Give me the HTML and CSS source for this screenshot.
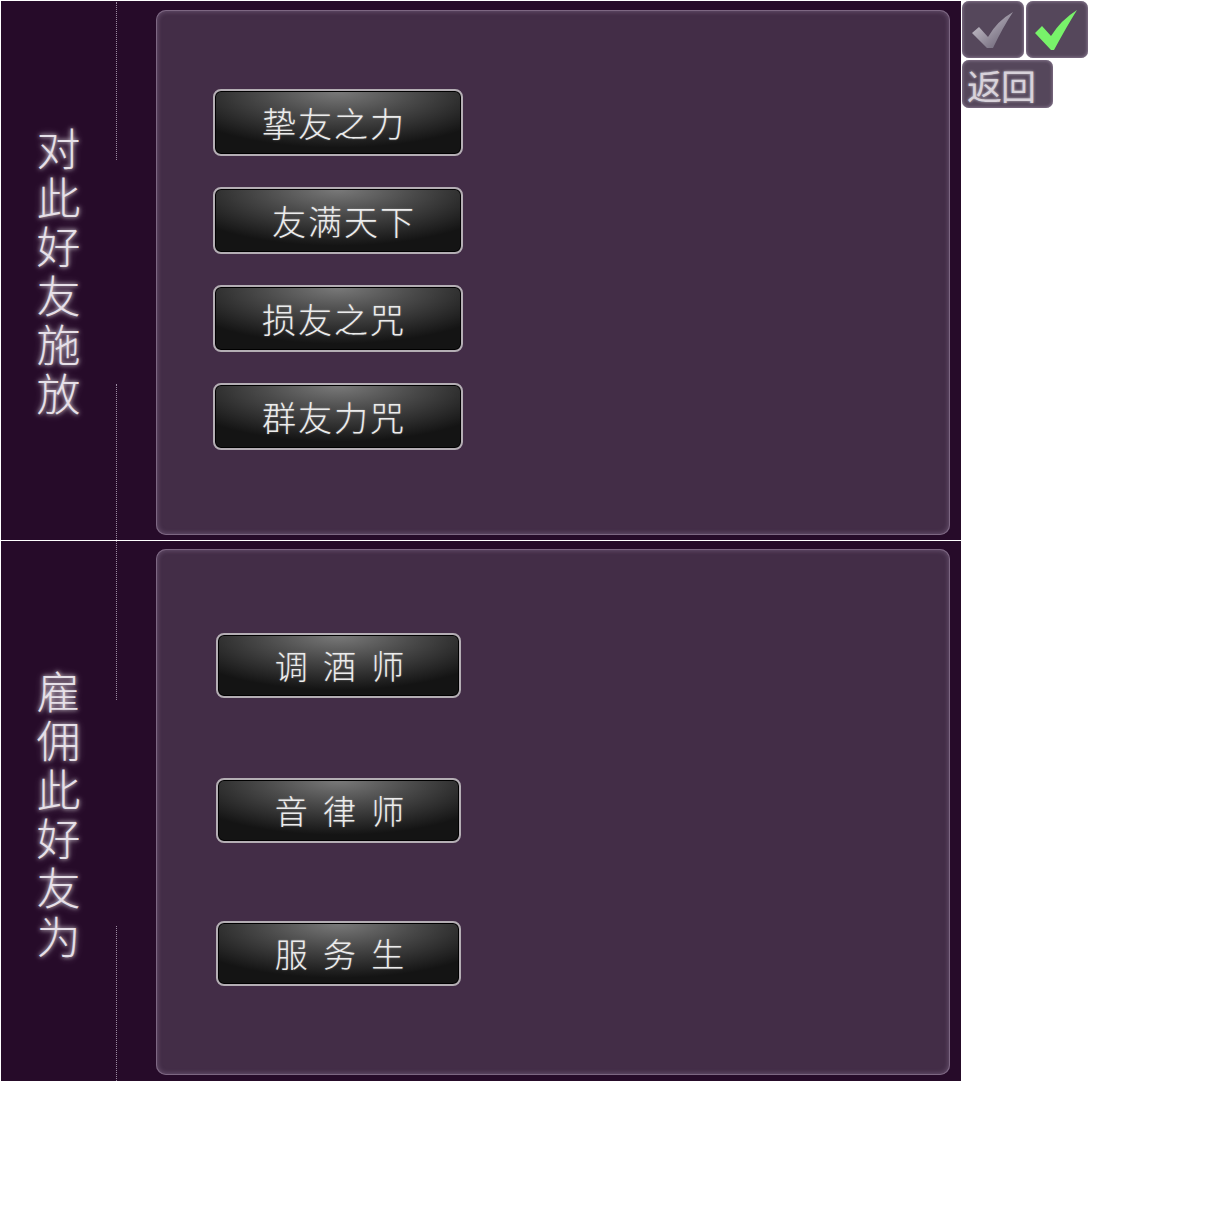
FILE: index.html
```html
<!DOCTYPE html>
<html lang="zh">
<head>
<meta charset="UTF-8">
<title>好友</title>
<link rel="stylesheet" href="styles.css">
</head>
<body>
<div class="page">
  <div class="board">
    <div class="section section-top">
      <div class="label">
        <span>对</span><span>此</span><span>好</span><span>友</span><span>施</span><span>放</span>
      </div>
      <div class="rule">
        <div class="dots dots-a"></div>
        <div class="gap"></div>
        <div class="dots dots-b"></div>
      </div>
      <div class="panel">
        <div class="btn-list">
          <button class="btn">挚友之力</button>
          <button class="btn btn-shift">友满天下</button>
          <button class="btn">损友之咒</button>
          <button class="btn">群友力咒</button>
        </div>
      </div>
    </div>
    <div class="divider"></div>
    <div class="section section-bottom">
      <div class="label">
        <span>雇</span><span>佣</span><span>此</span><span>好</span><span>友</span><span>为</span>
      </div>
      <div class="rule">
        <div class="dots dots-c"></div>
        <div class="gap"></div>
        <div class="dots dots-d"></div>
      </div>
      <div class="panel panel-bottom">
        <div class="job-list">
          <button class="btn btn-job">调 酒 师</button>
          <button class="btn btn-job">音 律 师</button>
          <button class="btn btn-job">服 务 生</button>
        </div>
      </div>
    </div>
  </div>

  <div class="side">
    <div class="side-row">
      <div class="tile">
        <svg width="48" height="42" viewBox="0 0 48 42">
          <defs>
            <linearGradient id="grey" x1="0" y1="0" x2="1" y2="1">
              <stop offset="0" stop-color="#d8d4dc"/>
              <stop offset="0.6" stop-color="#8e8796"/>
              <stop offset="1" stop-color="#5e566a"/>
            </linearGradient>
          </defs>
          <path d="M3 24 L10 18 L19 28 Q28 12 44 3 Q34 18 24 39 L18 39 Z" fill="url(#grey)"/>
        </svg>
      </div>
      <div class="tile">
        <svg width="48" height="44" viewBox="0 0 48 44">
          <path d="M2 25 L9 18 L18 28 Q28 12 44 2 Q34 18 21 42 L18 42 Z" fill="#78f26a"/>
        </svg>
      </div>
    </div>
    <div class="tile tile-wide">返回</div>
  </div>
</div>
</body>
</html>
```

FILE: styles.css
```css
body {
  margin: 0;
  background: #ffffff;
  font-family: "Noto Sans CJK SC", "Noto Sans", sans-serif;
}

.page {
  display: flex;
  align-items: flex-start;
  padding: 1px 0 0 1px;
}

.board {
  width: 960px;
  background: #260b29;
}

.section {
  display: flex;
  height: 539px;
}

.section-bottom {
  height: 540px;
}

.divider {
  height: 1px;
  background: #ffffff;
}

.label {
  width: 115px;
  display: flex;
  flex-direction: column;
  align-items: center;
  justify-content: center;
  gap: 5px;
  color: #e6e0e8;
  font-size: 44px;
  font-weight: 300;
  text-shadow: 0 0 4px rgba(255, 255, 255, 0.8), 0 0 8px rgba(255, 240, 255, 0.4);
}

.label span {
  writing-mode: vertical-rl;
  line-height: 1;
}

.section-top .label {
  margin-top: 2px;
}

.section-bottom .label {
  margin-top: 6px;
}

.rule {
  width: 1px;
  display: flex;
  flex-direction: column;
}

.dots {
  border-left: 1px dotted #9a8aa0;
}

.dots-a { height: 158px; margin-top: 1px; }
.dots-b { height: 156px; }
.dots-c { height: 159px; }
.dots-d { height: 155px; }

.gap {
  flex: 1;
}

.panel {
  flex: 1;
  margin: 9px 11px 5px 39px;
  background: #432d47;
  border-radius: 10px;
  box-shadow: inset 0 0 0 1px rgba(140, 118, 146, 0.7), inset 0 0 4px 2px rgba(120, 98, 128, 0.6);
}

.panel-bottom {
  margin: 8px 11px 6px 39px;
}

.btn-list {
  display: flex;
  flex-direction: column;
  gap: 31px;
  padding: 79px 0 0 57px;
}

.job-list {
  display: flex;
  flex-direction: column;
  padding: 84px 0 0 60px;
}

.btn {
  width: 250px;
  height: 67px;
  padding: 0;
  border: 2px solid #b4aeb4;
  border-radius: 8px;
  box-shadow: inset 0 0 0 1px #000000;
  background: radial-gradient(ellipse 70% 90% at 50% 0%, #7a7a7a 0%, #4a4a4a 45%, #141414 100%);
  color: #ececec;
  font-family: "Noto Sans CJK SC", sans-serif;
  font-size: 34px;
  font-weight: 300;
  letter-spacing: 2px;
  line-height: 1;
  text-shadow: 0 0 2px rgba(255, 255, 255, 0.35);
  text-align: center;
  padding-right: 8px;
}

.btn-shift {
  padding-right: 0;
  padding-left: 12px;
}

.btn-job {
  width: 245px;
  height: 65px;
  font-size: 33px;
  letter-spacing: 4px;
  padding-right: 0;
  padding-left: 6px;
}

.btn-job + .btn-job {
  margin-top: 80px;
}

.btn-job:last-child {
  margin-top: 78px;
}

.side {
  display: flex;
  flex-direction: column;
  gap: 2px;
  padding-left: 1px;
}

.side-row {
  display: flex;
  gap: 2px;
}

.tile {
  width: 62px;
  height: 57px;
  border-radius: 7px;
  background: #55475b;
  box-shadow: inset 0 0 3px 1px rgba(150, 134, 158, 0.7);
  display: flex;
  align-items: center;
  justify-content: center;
}

.tile-wide {
  width: 91px;
  height: 48px;
  color: #d8d2da;
  font-size: 35px;
  font-weight: 400;
  letter-spacing: -1px;
  line-height: 1;
  text-shadow: 0 0 3px rgba(255, 255, 255, 0.6);
  justify-content: flex-start;
  padding-left: 5px;
  box-sizing: border-box;
}
```
